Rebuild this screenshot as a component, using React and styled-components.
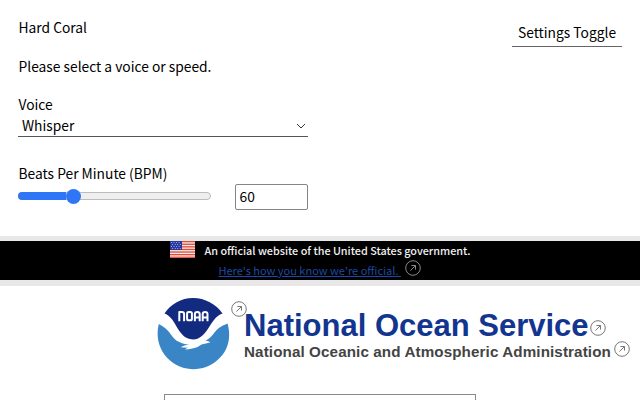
import React from "react";
import styled, { createGlobalStyle } from "styled-components";

const Global = createGlobalStyle`
  * { box-sizing: border-box; }
  body { margin: 0; background: #fff; overflow: hidden; }
`;
const Page = styled.div`
  width: 640px;
  height: 400px;
  overflow: hidden;
  display: flex;
  flex-direction: column;
  font-family: "Noto Sans CJK SC", "Noto Sans", sans-serif;
  font-size: 13.8px;
  line-height: 20px;
  color: #000;
`;
const Panel = styled.header`
  height: 236px;
  flex: none;
  display: flex;
  justify-content: space-between;
  align-items: flex-start;
  padding: 17px 18px 0;
`;
const Controls = styled.form`
  width: 290px;
  display: flex;
  flex-direction: column;
`;
const Line = styled.div`
  height: 20px;
  white-space: nowrap;
  padding-left: 0.5px;
  margin-bottom: ${(p) => p.$gap || 0}px;
`;
const Select = styled.div`
  height: 22px;
  display: flex;
  align-items: flex-start;
  justify-content: space-between;
  padding: 0 2px 0 4px;
  border-bottom: 1px solid #555;
  margin-bottom: 26px;
`;
const SpeedRow = styled.div`
  display: flex;
  justify-content: space-between;
  align-items: flex-start;
`;
const Track = styled.div`
  width: 193px;
  height: 8px;
  margin-top: 8px;
  border: 1px solid #bcbcbc;
  border-radius: 4px;
  background: #efefef;
  display: flex;
  align-items: center;
`;
const Fill = styled.div`
  width: 48px;
  height: 8px;
  margin-left: -1px;
  border-radius: 4px 0 0 4px;
  background: #2f76f6;
  flex: none;
`;
const Thumb = styled.div`
  width: 15px;
  height: 15px;
  border-radius: 50%;
  background: #2f76f6;
  flex: none;
`;
const NumberBox = styled.div`
  width: 73px;
  height: 26px;
  border: 1px solid #858585;
  border-radius: 2px;
  padding: 0 3.5px;
  line-height: 22px;
`;
const Toggle = styled.div`
  width: 110px;
  height: 30px;
  padding-top: 5px;
  text-align: center;
  border-bottom: 1px solid #666;
`;
const Banner = styled.section`
  height: 50px;
  flex: none;
  border-top: 5px solid #e8e8e8;
  border-bottom: 6px solid #e8e8e8;
  background: #000;
  color: #f0f0f0;
  padding-left: 170px;
  display: flex;
  align-items: flex-start;
`;
const BannerText = styled.div`
  margin-left: 9.5px;
  font-size: 10.8px;
  white-space: nowrap;
`;
const Official = styled.div`
  height: 20px;
  line-height: 18px;
  font-weight: 500;
`;
const LinkRow = styled.div`
  display: flex;
  height: 20px;
  margin-left: 14px;
  gap: 5px;
`;
const Link = styled.a`
  color: #1b4aa5;
  text-decoration: underline;
  font-size: 11px;
  line-height: 19px;
  white-space: pre;
  width: 181px;
`;
const Brand = styled.main`
  display: flex;
  height: 108px;
  flex: none;
  padding: 12px 0 0 157px;
`;
const Titles = styled.div`
  font-family: "Liberation Sans", Arial, sans-serif;
  font-weight: 700;
  white-space: nowrap;
`;
const Title = styled.h1`
  display: flex;
  margin: 9px 0 0;
  font-size: 31px;
  line-height: 38px;
  height: 34px;
  color: #12358f;
  gap: 2px;
`;
const Subtitle = styled.div`
  display: flex;
  font-size: 15.2px;
  line-height: 21px;
  color: #444;
  gap: 3px;
`;
const Words = styled.span`
  width: ${(p) => p.$w}px;
  letter-spacing: ${(p) => p.$track || 0}px;
`;
const Circle = styled.svg`
  width: 16px;
  height: 16px;
  flex: none;
  display: block;
  color: ${(p) => p.$color || "#777"};
  margin: ${(p) => p.$m || "0"};
`;
const Frame = styled.section`
  width: 312px;
  height: 20px;
  flex: none;
  margin-left: 164px;
  border: 1px solid #888;
`;
const Block = styled.svg`
  display: block;
  flex: none;
`;
const Chevron = styled(Block)`
  margin-top: 7px;
`;

const External = (props) => (
  <Circle viewBox="0 0 16 16" fill="none" stroke="currentColor" {...props}>
    <circle cx="8" cy="8" r="7.3" strokeWidth="1" />
    <path d="M5.4 10.6 10.4 5.6M6.4 5.5h4.1v4.1" strokeWidth="1" />
  </Circle>
);

const Flag = () => (
  <Block width="25" height="17" viewBox="0 0 25 17">
    <rect width="25" height="17" fill="#f7e9e4" />
    {[0, 1, 2, 3, 4, 5, 6].map((i) => (
      <rect key={i} y={i * 2.6} width="25" height="1.3" fill="#de4a3c" />
    ))}
    <rect width="12" height="9" fill="#2637a0" />
    {[1.4, 3.4, 5.4, 7.4].map((y, r) =>
      [1.5, 4, 6.5, 9].map((x) => (
        <circle key={`${x}-${y}`} cx={x + (r % 2) * 1.2} cy={y} r=".5" fill="#c9cdf0" />
      ))
    )}
  </Block>
);

const Logo = () => (
  <Block width="73" height="72" viewBox="0 0 73 72">
    <path
      d="M7.500 15.500C14 6 24 0 36 0S59 6 65.500 15.500C58.500 18 55.500 24 51.500 30C46.500 37.500 42 41.500 36.500 41.500C30 41.500 25.500 38 21 31C17 24 14 18 7.500 15.500Z"
      fill="#122a80"
    />
    <path
      d="M1.800 26C-1.500 39 2 53 13 62.500C26 74 47 74 60 62.500C71.500 53 74.500 39 70.500 25.500C64.500 28 61 30 57.500 34.500C54.500 38.500 52 41 48.500 42.700Q51 42.500 53.500 44.300Q49 45.500 44.500 46.500C40 49.500 38 50.700 28 51.500Q29 50.500 31 49.800L23.500 49.300Q27 47 32 46.700C23 45.500 18 42.500 15 38C11 32 8 29.500 1.800 26Z"
      fill="#3985c6"
    />
    <g fill="none" stroke="#fff" strokeWidth="2" strokeLinejoin="round">
      <path d="M22.300 23.300v-9.300h2.500q2.300 0 2.300 2.300v7" />
      <rect x="30.100" y="14" width="4.800" height="8.300" rx="1.600" />
      <path d="M37.900 23.300v-7q0-2.300 2.400-2.300t2.400 2.300v7M37.900 19.500h4.800" />
      <path d="M45.700 23.300v-7q0-2.300 2.400-2.300t2.400 2.300v7M45.700 19.500h4.800" />
    </g>
  </Block>
);

export default function App() {
  return (
    <Page>
      <Global />
      <Panel>
        <Controls>
          <Line $gap={19}>Hard Coral</Line>
          <Line $gap={18}>Please select a voice or speed.</Line>
          <Line $gap={1}>Voice</Line>
          <Select>
            <span>Whisper</span>
            <Chevron width="10" height="8" viewBox="0 0 10 8" fill="none" stroke="#333">
              <path d="m1 2 4 4 4-4" />
            </Chevron>
          </Select>
          <Line $gap={1}>Beats Per Minute (BPM)</Line>
          <SpeedRow>
            <Track>
              <Fill />
              <Thumb />
            </Track>
            <NumberBox>60</NumberBox>
          </SpeedRow>
        </Controls>
        <Toggle>Settings Toggle</Toggle>
      </Panel>
      <Banner>
        <Flag />
        <BannerText>
          <Official>An official website of the United States government.</Official>
          <LinkRow>
            <Link>{"Here's how you know we're official. "}</Link>
            <External $color="#898989" $m="-1px 0 0" />
          </LinkRow>
        </BannerText>
      </Banner>
      <Brand>
        <Logo />
        <External $m="3px -3px 0 1px" />
        <Titles>
          <Title>
            <Words $w={344}>National Ocean Service</Words>
            <External $m="13px 0 0" />
          </Title>
          <Subtitle>
            <Words $w={367} $track={0.11}>National Oceanic and Atmospheric Administration</Words>
            <External />
          </Subtitle>
        </Titles>
      </Brand>
      <Frame />
    </Page>
  );
}
